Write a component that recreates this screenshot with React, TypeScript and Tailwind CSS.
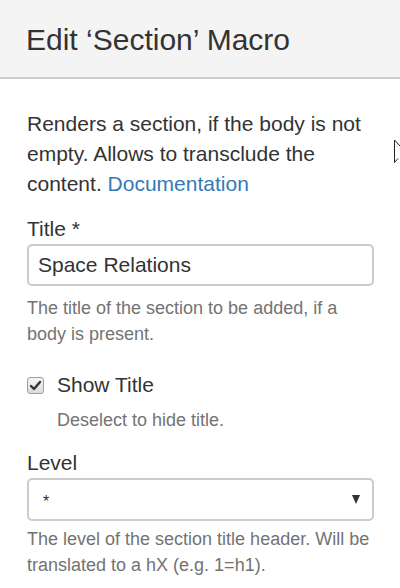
import React from "react";

export default function App() {
  return (
    <div className="relative w-[400px] h-[588px] overflow-hidden bg-white text-[#333333] font-['Liberation_Sans',Arial,sans-serif]">
      <div className="h-[79px] bg-[#f4f4f4] border-b-2 border-[#cccccc] flex items-center pl-[26px] pt-[2px]">
        <h1 className="text-[30px] leading-[36px] text-[#333333] m-0">Edit ‘Section’ Macro</h1>
      </div>
      <div className="pl-[27px] pr-[26px] pt-[30px]">
        <p className="text-[21px] leading-[30px] m-0">
          Renders a section, if the body is not empty. Allows to transclude the content.{" "}
          <span className="text-[#337ab7]">Documentation</span>
        </p>
        <div className="mt-[15px] text-[21px] leading-[30px]">Title *</div>
        <div className="h-[42px] w-[347px] border-2 border-[#cccccc] rounded-[5px] flex items-center px-[9px] text-[21px] text-[#333333]">
          Space Relations
        </div>
        <p className="mt-[9px] text-[18px] leading-[26px] text-[#737373] m-0">
          The title of the section to be added, if a body is present.
        </p>
        <div className="mt-[23px] flex items-center h-[30px]">
          <div className="w-[17px] h-[17px] rounded-[3px] border border-[#a0a0a0] bg-gradient-to-b from-[#f4f4f4] to-[#dcdcdc] flex items-center justify-center">
            <svg width="13" height="13" viewBox="0 0 13 13">
              <path d="M2 7 L5 10 L11 3" fill="none" stroke="#333" strokeWidth="2.4" strokeLinecap="round" strokeLinejoin="round" />
            </svg>
          </div>
          <span className="ml-[13px] text-[21px] leading-[30px]">Show Title</span>
        </div>
        <p className="mt-[7px] pl-[30px] text-[18px] leading-[26px] text-[#737373] m-0">
          Deselect to hide title.
        </p>
        <div className="mt-[15px] text-[21px] leading-[30px]">Level</div>
        <div className="h-[43px] w-[347px] border-2 border-[#cccccc] rounded-[5px] flex items-center justify-between pl-[14px] pr-[12px]">
          <span className="text-[16px] leading-[16px] text-[#333] mt-[4px]">*</span>
          <svg width="8" height="9" viewBox="0 0 8 9">
            <path d="M0 0 L8 0 L4 9 Z" fill="#333" />
          </svg>
        </div>
        <p className="mt-[5px] text-[18px] leading-[26px] text-[#737373] m-0">
          The level of the section title header. Will be translated to a hX (e.g. 1=h1).
        </p>
      </div>
      <svg className="absolute left-[393px] top-[139px]" width="8" height="26" viewBox="0 0 8 26">
        <path d="M1.5 1 L1.5 23.5 L5 19.5 M1.5 1 L8 8" fill="none" stroke="#222" strokeWidth="1" />
      </svg>
    </div>
  );
}
